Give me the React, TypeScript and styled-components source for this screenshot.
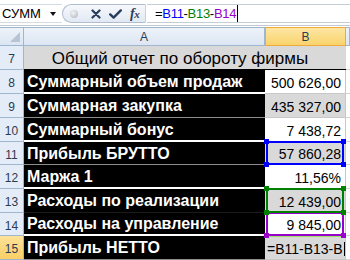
import React from 'react';
import styled, { createGlobalStyle, css } from 'styled-components';

const Global = createGlobalStyle`
  html, body { margin: 0; padding: 0; background: #fff; }
  body { width: 350px; height: 260px; overflow: hidden; font-family: "Liberation Sans", Arial, sans-serif; }
`;

const Window = styled.div`
  width: 350px;
  height: 260px;
  overflow: hidden;
  display: flex;
  flex-direction: column;
  background: #fff;
`;

const FormulaBar = styled.div`
  display: flex;
  height: 27px;
  box-sizing: border-box;
  padding-top: 4px;
  padding-bottom: 2px;
  border-bottom: 1px solid #c3cad4;
  background: #fff;
`;

const NameBox = styled.div`
  width: 62px;
  box-sizing: border-box;
  display: flex;
  align-items: center;
  justify-content: space-between;
  padding: 0 6px 0 2px;
  border-top: 1px solid #d5dbe3;
  border-bottom: 1px solid #d5dbe3;
  font-size: 13px;
  color: #000;
`;

const DropArrow = styled.span`
  width: 0;
  height: 0;
  border-left: 3px solid transparent;
  border-right: 3px solid transparent;
  border-top: 4px solid #111;
  margin-top: 1px;
`;

const ButtonGroup = styled.div`
  width: 84px;
  box-sizing: border-box;
  display: flex;
  align-items: center;
  border: 1px solid #aebdd0;
  border-right-color: #c8d2df;
  border-radius: 11px 0 0 11px;
  background: linear-gradient(#f6f8fc, #e2e9f3);
  padding-left: 7px;
`;

const Dot = styled.span`
  width: 8px;
  height: 8px;
  border-radius: 50%;
  background: radial-gradient(circle at 40% 35%, #f4f4f4 0%, #c9ced6 60%, #a9b0ba 100%);
  margin-right: 13px;
`;

const IconSlot = styled.span<{ $gap: number }>`
  display: flex;
  align-items: center;
  justify-content: center;
  margin-right: ${(p) => p.$gap}px;
`;

const Fx = styled.span`
  font-family: "Liberation Serif", "Times New Roman", serif;
  font-style: italic;
  font-weight: bold;
  font-size: 14px;
  color: #2a3d5e;
  letter-spacing: -0.5px;
  & small { font-size: 11px; }
`;

const FormulaInput = styled.div`
  flex: 1;
  margin-left: 1px;
  box-sizing: border-box;
  display: flex;
  align-items: center;
  padding-left: 8px;
  border-top: 1px solid #c5cdd8;
  border-bottom: 1px solid #c5cdd8;
  font-size: 13px;
  letter-spacing: -0.3px;
  color: #000;
`;

const Ref = styled.span<{ $c: string }>`
  color: ${(p) => p.$c};
`;

const Caret = styled.span<{ $h: number }>`
  width: 1px;
  height: ${(p) => p.$h}px;
  background: #000;
  margin-left: 1px;
  flex: none;
`;

const Spacer = styled.div`
  height: 2px;
  background: #fff;
`;

const Sheet = styled.div`
  display: grid;
  grid-template-columns: 24px 241px 81px 1fr;
  grid-template-rows: 19px 24px 24px 24px 24px 23px 24px 24px 23px 24px;
`;

const HeaderBase = css`
  box-sizing: border-box;
  background: linear-gradient(#edf2f9, #dce6f2);
  border-right: 1px solid #9eb6ce;
  border-bottom: 1px solid #9eb6ce;
  border-top: 1px solid #9eb6ce;
  color: #2b3b52;
`;

const Corner = styled.div`
  ${HeaderBase};
  display: flex;
  align-items: flex-end;
  justify-content: flex-end;
  padding: 0 3px 3px 0;
`;

const CornerMark = styled.span`
  width: 10px;
  height: 10px;
  background: #b7c4d6;
  clip-path: polygon(100% 0, 100% 100%, 0 100%);
`;

const ColHeader = styled.div<{ $selected?: boolean }>`
  ${HeaderBase};
  display: flex;
  align-items: center;
  justify-content: center;
  font-size: 12px;
  padding-top: 1px;
  ${(p) =>
    p.$selected &&
    css`
      background: linear-gradient(#fde7a4, #f9d36c);
      border-color: #f2a93b;
      border-left: 1px solid #f2a93b;
    `}
`;

const RowHeader = styled.div<{ $selected?: boolean }>`
  box-sizing: border-box;
  background: #e4ecf7;
  border-right: 1px solid #9eb6ce;
  border-bottom: 1px solid #9eb6ce;
  display: flex;
  align-items: center;
  justify-content: center;
  padding-top: 3px;
  font-size: 12px;
  color: #2b3b52;
  ${(p) =>
    p.$selected &&
    css`
      background: linear-gradient(#fde29a, #f9cf66);
      border-right-color: #f2a93b;
    `}
`;

const TitleCell = styled.div`
  grid-column: span 2;
  box-sizing: border-box;
  background: #d9d9d9;
  border-bottom: 1px solid #000;
  display: flex;
  align-items: center;
  justify-content: center;
  padding: 2px 10px 0 0;
  font-size: 17px;
  color: #000;
  white-space: nowrap;
`;

const ruleColors = { white: '#ffffff', grey: '#8c8c8c', dark: '#1a1a1a' } as const;
type Rule = keyof typeof ruleColors;

const LabelCell = styled.div<{ $rule: Rule }>`
  box-sizing: border-box;
  background: #000;
  border-bottom: ${(p) => (p.$rule === 'white' ? 2 : 1)}px solid ${(p) => ruleColors[p.$rule]};
  display: flex;
  align-items: center;
  padding: 1px 0 0 3px;
  font-size: 16px;
  font-weight: bold;
  color: #fff;
  white-space: nowrap;
  overflow: hidden;
`;

const ValueCell = styled.div<{ $shade: 'white' | 'grey'; $edit?: boolean }>`
  position: relative;
  box-sizing: border-box;
  background: ${(p) => (p.$shade === 'grey' ? '#d9d9d9' : '#fff')};
  border-right: 1px solid #c8c8c8;
  border-bottom: 1px solid #c8c8c8;
  display: flex;
  align-items: center;
  justify-content: ${(p) => (p.$edit ? 'flex-start' : 'flex-end')};
  padding: ${(p) => (p.$edit ? '2px 0 0 2px' : '2px 4px 0 0')};
  font-size: 14px;
  color: #000;
  white-space: nowrap;
  ${(p) =>
    p.$edit &&
    css`
      border-top: 1px solid #9be26b;
    `}
`;

const EmptyCell = styled.div`
  box-sizing: border-box;
  background: #fff;
  border-bottom: 1px solid #d4d4d4;
`;

const RefBox = styled.div<{ $c: string; $z: number }>`
  position: absolute;
  top: -1px;
  left: 1px;
  right: 1px;
  bottom: -1px;
  border: 2px solid ${(p) => p.$c};
  z-index: ${(p) => p.$z};
  pointer-events: none;
`;

const Handle = styled.span<{ $c: string; $pos: 'tl' | 'tr' | 'bl' | 'br' }>`
  position: absolute;
  width: 5px;
  height: 5px;
  background: ${(p) => p.$c};
  ${(p) => (p.$pos[0] === 't' ? 'top: -4px;' : 'bottom: -4px;')}
  ${(p) => (p.$pos[1] === 'l' ? 'left: -4px;' : 'right: -4px;')}
`;

const CloseIcon = () => (
  <svg width="10" height="10" viewBox="0 0 10 10">
    <path d="M1.5 1.5 L8.5 8.5 M8.5 1.5 L1.5 8.5" stroke="#283c5c" strokeWidth="2.2" strokeLinecap="round" />
  </svg>
);

const CheckIcon = () => (
  <svg width="13" height="10" viewBox="0 0 13 10">
    <path d="M1.2 5.4 L4.6 8.6 L11.8 1.4" stroke="#283c5c" strokeWidth="2.4" fill="none" strokeLinecap="round" strokeLinejoin="round" />
  </svg>
);

type RowData = {
  n: number;
  label: string;
  value: string;
  shade: 'white' | 'grey';
  rule: Rule;
  ref?: { c: string; z: number; top?: boolean };
  edit?: boolean;
};

const rows: RowData[] = [
  { n: 8, label: 'Суммарный объем продаж', value: '500 626,00', shade: 'white', rule: 'white' },
  { n: 9, label: 'Суммарная закупка', value: '435 327,00', shade: 'grey', rule: 'grey' },
  { n: 10, label: 'Суммарный бонус', value: '7 438,72', shade: 'white', rule: 'white' },
  { n: 11, label: 'Прибыль БРУТТО', value: '57 860,28', shade: 'grey', rule: 'grey', ref: { c: '#0000ff', z: 2, top: true } },
  { n: 12, label: 'Маржа 1', value: '11,56%', shade: 'white', rule: 'white' },
  { n: 13, label: 'Расходы по реализации', value: '12 439,00', shade: 'grey', rule: 'dark', ref: { c: '#008000', z: 3, top: true } },
  { n: 14, label: 'Расходы на управление', value: '9 845,00', shade: 'white', rule: 'white', ref: { c: '#9900cc', z: 2 } },
  { n: 15, label: 'Прибыль НЕТТО', value: '=B11-B13-B', shade: 'grey', rule: 'grey', edit: true },
];

export default function App() {
  return (
    <Window>
      <Global />
      <FormulaBar>
        <NameBox>
          СУММ
          <DropArrow />
        </NameBox>
        <ButtonGroup>
          <Dot />
          <IconSlot $gap={8}>
            <CloseIcon />
          </IconSlot>
          <IconSlot $gap={8}>
            <CheckIcon />
          </IconSlot>
          <Fx>
            f<small>x</small>
          </Fx>
        </ButtonGroup>
        <FormulaInput>
          =<Ref $c="#0000ff">B11</Ref>-<Ref $c="#008000">B13</Ref>-<Ref $c="#9900cc">B14</Ref>
          <Caret $h={17} />
        </FormulaInput>
      </FormulaBar>
      <Spacer />
      <Sheet>
        <Corner>
          <CornerMark />
        </Corner>
        <ColHeader>A</ColHeader>
        <ColHeader $selected>B</ColHeader>
        <ColHeader />

        <RowHeader>7</RowHeader>
        <TitleCell>Общий отчет по обороту фирмы</TitleCell>
        <EmptyCell />

        {rows.map((r) => (
          <React.Fragment key={r.n}>
            <RowHeader $selected={r.n === 15}>{r.n}</RowHeader>
            <LabelCell $rule={r.rule}>{r.label}</LabelCell>
            <ValueCell $shade={r.shade} $edit={r.edit}>
              {r.value}
              {r.edit && <Caret $h={14} />}
              {r.ref && (
                <RefBox $c={r.ref.c} $z={r.ref.z}>
                  {r.ref.top && <Handle $c={r.ref.c} $pos="tl" />}
                  {r.ref.top && <Handle $c={r.ref.c} $pos="tr" />}
                  <Handle $c={r.ref.c} $pos="bl" />
                  <Handle $c={r.ref.c} $pos="br" />
                </RefBox>
              )}
            </ValueCell>
            <EmptyCell />
          </React.Fragment>
        ))}
      </Sheet>
    </Window>
  );
}
